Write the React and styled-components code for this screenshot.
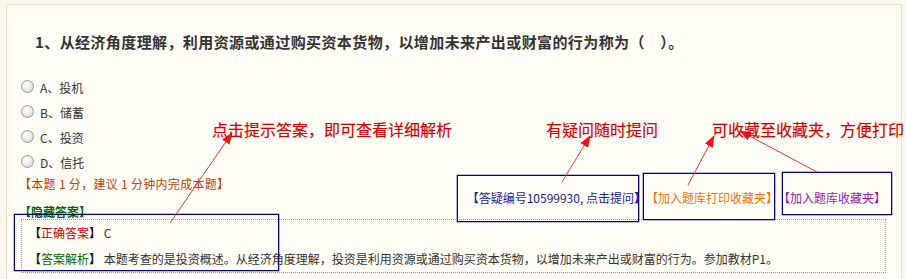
import React from "react";
import styled, { createGlobalStyle } from "styled-components";

const Global = createGlobalStyle`
  html, body { margin: 0; padding: 0; overflow: hidden; background: #fcf7ee; }
  body { font-family: "Noto Sans CJK SC", "Liberation Sans", sans-serif; }
`;

const Page = styled.div`
  position: relative;
  width: 906px;
  height: 279px;
  padding: 4px 4px 0 6px;
  box-sizing: border-box;
`;

const Frame = styled.div`
  height: 100%;
  box-sizing: border-box;
  border: 1px solid #f0dcc0;
  border-bottom: none;
  background: #fffdf5;
  padding: 0 15px 0 14px;
`;

const Title = styled.h1`
  margin: 25px 0 0 14px;
  font-size: 15px;
  line-height: 24px;
  font-weight: bold;
  letter-spacing: 0.4px;
  color: #333;
  white-space: nowrap;
`;

const Options = styled.div`
  margin-top: 21px;
  display: flex;
  flex-direction: column;
`;

const OptionRow = styled.label`
  display: flex;
  align-items: center;
  height: 25px;
  font-size: 12px;
  color: #333;
`;

const Radio = styled.span`
  width: 13px;
  height: 13px;
  box-sizing: border-box;
  border-radius: 50%;
  border: 1px solid #9a9a9a;
  background: radial-gradient(circle at 40% 35%, #ffffff 0%, #ececec 45%, #c9c9c9 100%);
  margin: -3px 6px 0 0;
  flex: none;
`;

const MetaRow = styled.div`
  display: flex;
  justify-content: space-between;
  height: 30px;
`;

const Info = styled.div`
  align-self: flex-start;
  font-size: 12px;
  line-height: 18px;
  color: #c2410c;
  margin-left: -2px;
  letter-spacing: 0.3px;
  white-space: pre;
`;

const Links = styled.div`
  align-self: flex-end;
  display: flex;
  font-size: 12px;
  line-height: 14px;
`;

const LinkText = styled.span`
  color: ${(p) => p.$color};
  white-space: pre;
`;

const Hidden = styled.div`
  font-size: 12px;
  line-height: 14px;
  font-weight: bold;
  color: #006600;
  margin-left: -2px;
`;

const AnswerBox = styled.div`
  border: 1px dotted #c8945a;
  padding-left: 7px;
`;

const AnswerLine = styled.div`
  font-size: 12px;
  line-height: 26px;
  color: #333;
  white-space: nowrap;
`;

const Bracket = styled.span`
  color: #111;
  font-weight: bold;
`;

const Label = styled.span`
  color: ${(p) => p.$color};
`;

const Overlay = styled.div`
  position: absolute;
  inset: 0;
  pointer-events: none;
`;

const Note = styled.div`
  position: absolute;
  left: ${(p) => p.$x}px;
  top: ${(p) => p.$y}px;
  font-size: 16px;
  line-height: 24px;
  color: #d40000;
  white-space: nowrap;
  text-shadow: 0 0 1px rgba(255, 80, 80, 0.45);
`;

const MarkBox = styled.div`
  position: absolute;
  left: ${(p) => p.$x}px;
  top: ${(p) => p.$y}px;
  width: ${(p) => p.$w}px;
  height: ${(p) => p.$h}px;
  box-sizing: border-box;
  border: 1px solid #000088;
  box-shadow: 0 0 0 0.5px rgba(0, 0, 136, 0.55);
`;

const ArrowSvg = styled.svg`
  position: absolute;
  left: 0;
  top: 0;
`;

const options = ["A、投机", "B、储蓄", "C、投资", "D、信托"];

const arrows = [
  [170, 223, 232, 133],
  [562, 182, 590, 136],
  [688, 185, 714, 136],
  [817, 172, 740, 131],
];

const boxes = [
  [14, 214, 278, 270],
  [457, 175, 638, 221],
  [643, 173, 774, 219],
  [782, 172, 891, 214],
];

export default function App() {
  return (
    <>
      <Global />
      <Page>
        <Frame>
          <Title>1、从经济角度理解，利用资源或通过购买资本货物，以增加未来产出或财富的行为称为（　）。</Title>
          <Options>
            {options.map((o) => (
              <OptionRow key={o}>
                <Radio />
                {o}
              </OptionRow>
            ))}
          </Options>
          <MetaRow>
            <Info>【本题 1 分，建议 1 分钟内完成本题】</Info>
            <Links>
              <LinkText $color="#1a1aa0">【答疑编号10599930, 点击提问】</LinkText>
              <LinkText $color="#e8750f">【加入题库打印收藏夹】</LinkText>
              <LinkText $color="#8a1db8">【加入题库收藏夹】</LinkText>
            </Links>
          </MetaRow>
          <Hidden>【隐藏答案】</Hidden>
          <AnswerBox>
            <AnswerLine>
              <Bracket>【</Bracket>
              <Label $color="#cc0000">正确答案</Label>
              <Bracket>】</Bracket> C
            </AnswerLine>
            <AnswerLine>
              <Bracket>【</Bracket>
              <Label $color="#006600">答案解析</Label>
              <Bracket>】</Bracket> 本题考查的是投资概述。从经济角度理解，投资是利用资源或通过购买资本货物，以增加未来产出或财富的行为。参加教材P1。
            </AnswerLine>
          </AnswerBox>
        </Frame>
        <Overlay>
          {boxes.map(([x1, y1, x2, y2]) => (
            <MarkBox key={x1} $x={x1} $y={y1} $w={x2 - x1 + 1} $h={y2 - y1 + 1} />
          ))}
          <ArrowSvg width="906" height="279" viewBox="0 0 906 279">
            <defs>
              <marker id="ah" markerWidth="12" markerHeight="9" refX="11" refY="4.5" orient="auto" markerUnits="userSpaceOnUse">
                <path d="M0,0 L12,4.5 L0,9 Z" fill="#ff1010" />
              </marker>
            </defs>
            {arrows.map(([x1, y1, x2, y2]) => (
              <line key={x1} x1={x1} y1={y1} x2={x2} y2={y2} stroke="#e23a3a" strokeWidth="1" markerEnd="url(#ah)" />
            ))}
          </ArrowSvg>
          <Note $x={212} $y={117}>点击提示答案，即可查看详细解析</Note>
          <Note $x={546} $y={117}>有疑问随时提问</Note>
          <Note $x={712} $y={117}>可收藏至收藏夹，方便打印</Note>
        </Overlay>
      </Page>
    </>
  );
}
